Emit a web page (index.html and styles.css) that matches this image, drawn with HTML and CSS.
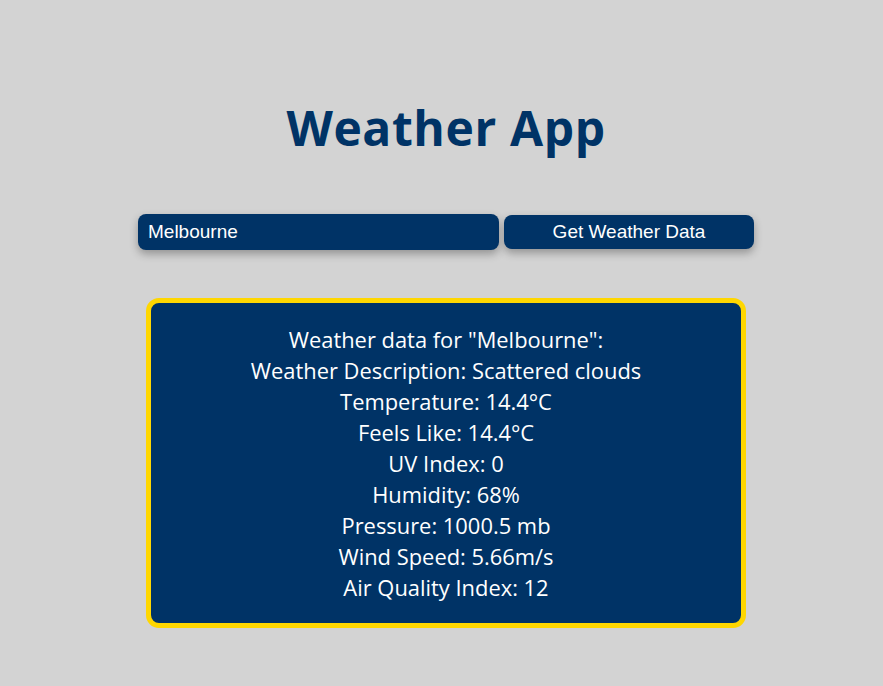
FILE: index.html
```html
<!DOCTYPE html>
<html lang="en">
<head>
<meta charset="utf-8">
<title>Weather App</title>
<link rel="stylesheet" href="styles.css">
</head>
<body>
<main class="app">
  <h1 class="title">Weather App</h1>
  <form class="search">
    <input class="city" type="text" value="Melbourne">
    <button class="get" type="button">Get Weather Data</button>
  </form>
  <section class="result">
    <p>Weather data for "Melbourne":</p>
    <p>Weather Description: Scattered clouds</p>
    <p>Temperature: 14.4°C</p>
    <p>Feels Like: 14.4°C</p>
    <p>UV Index: 0</p>
    <p>Humidity: 68%</p>
    <p>Pressure: 1000.5 mb</p>
    <p>Wind Speed: 5.66m/s</p>
    <p>Air Quality Index: 12</p>
  </section>
</main>
</body>
</html>
```
FILE: styles.css
```css
html, body {
  margin: 0;
  background: #d3d3d3;
}
body {
  padding-left: 9px;
}
.app {
  display: flex;
  flex-direction: column;
  align-items: center;
  padding-top: 96px;
}
.title {
  margin: 0;
  font-family: "Open Sans", sans-serif;
  font-weight: 700;
  font-size: 48px;
  line-height: 64px;
  color: #003366;
  letter-spacing: 0.6px;
}
.search {
  display: flex;
  gap: 5px;
  align-items: center;
  margin-top: 54px;
}
.city {
  box-sizing: border-box;
  width: 361px;
  height: 36px;
  border: none;
  border-radius: 8px;
  background: #003366;
  color: #fff;
  font-family: "Liberation Sans", Arial, sans-serif;
  font-size: 19px;
  padding: 0 10px;
  box-shadow: 0 4px 8px rgba(0, 0, 0, 0.3);
  outline: none;
}
.get {
  box-sizing: border-box;
  width: 250px;
  height: 34px;
  border: none;
  border-radius: 8px;
  background: #003366;
  color: #fff;
  font-family: "Liberation Sans", Arial, sans-serif;
  font-size: 19px;
  box-shadow: 0 4px 8px rgba(0, 0, 0, 0.3);
}
.result {
  box-sizing: border-box;
  width: 600px;
  margin-top: 48px;
  padding: 21px 10px 20px;
  border: 5px solid #ffd700;
  border-radius: 13px;
  background: #003366;
  color: #fff;
  text-align: center;
  font-family: "Open Sans", sans-serif;
  font-size: 21.9px;
  line-height: 31px;
}
.result p {
  margin: 0;
}
```
